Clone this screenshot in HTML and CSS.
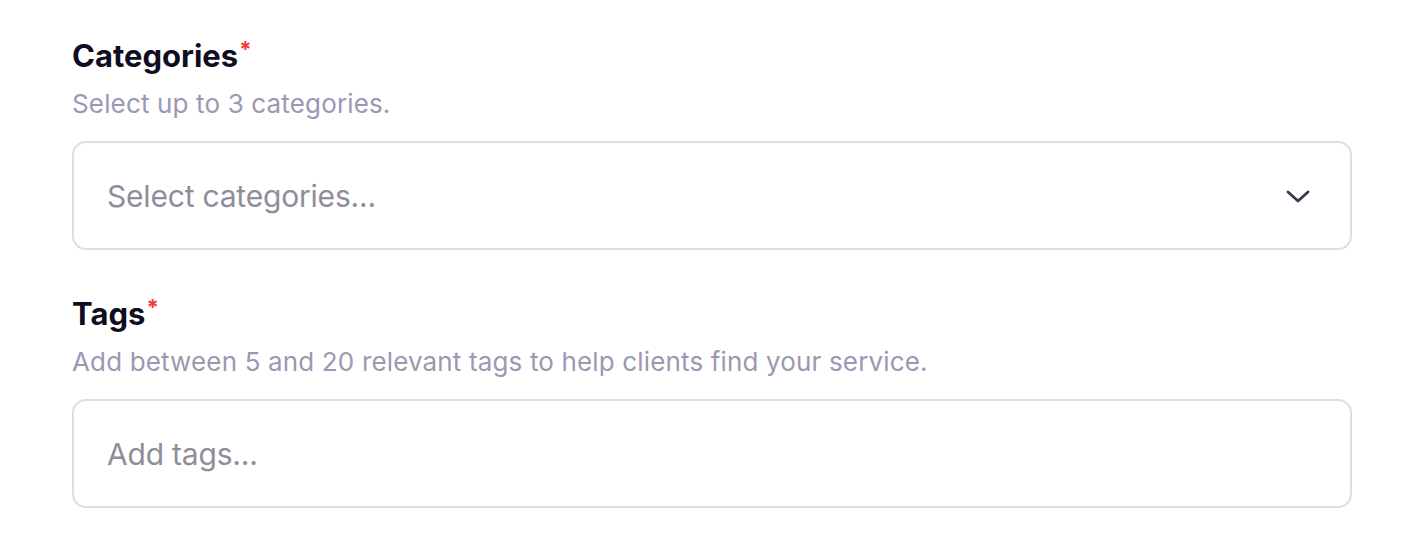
FILE: index.html
```html
<!DOCTYPE html>
<html>
	<head>
		<meta charset="UTF-8">
		<title>Service details</title>
		<link rel="stylesheet" href="styles.css">
	</head>
	<body>
		<div class="form_wrap">
			<div class="field">
				<label class="field_label">Categories<span class="req">*</span></label>
				<p class="field_hint">Select up to 3 categories.</p>
				<div class="select_box">
					<span class="placeholder">Select categories...</span>
					<svg class="chevron" width="24" height="24" viewBox="0 0 24 24" fill="none" stroke="#3a3850" stroke-width="2.8" stroke-linecap="round" stroke-linejoin="round"><path d="M2 8l10 9 10-9"/></svg>
				</div>
			</div>
			<div class="field">
				<label class="field_label">Tags<span class="req">*</span></label>
				<p class="field_hint">Add between 5 and 20 relevant tags to help clients find your service.</p>
				<div class="select_box">
					<span class="placeholder">Add tags...</span>
				</div>
			</div>
		</div>
	</body>
</html>
```
FILE: styles.css
```css
* { margin: 0; padding: 0; box-sizing: border-box; }
body { background: #fff; font-family: Inter, "Liberation Sans", sans-serif; }

.form_wrap { width: 1280px; margin: 0 72px; padding-top: 38px; }
.field { margin-bottom: 46px; }
.field_label { display: block; font-size: 31px; line-height: 36px; font-weight: 700; color: #0f0d1f; }
.req { color: #f03a3a; font-size: 22px; vertical-align: top; line-height: 20px; position: relative; top: 1px; margin-left: 1px; }
.field_hint { margin-top: 14px; font-size: 26px; line-height: 32px; color: #9d97b2; letter-spacing: 0.15px; }

.select_box { margin-top: 21px; height: 109px; border: 2px solid #dedde2; border-radius: 14px; display: flex; align-items: center; justify-content: space-between; padding: 0 40px 0 33px; }
.placeholder { font-size: 30px; color: #8f8d9b; letter-spacing: -0.2px; }
.chevron { display: block; }
```
